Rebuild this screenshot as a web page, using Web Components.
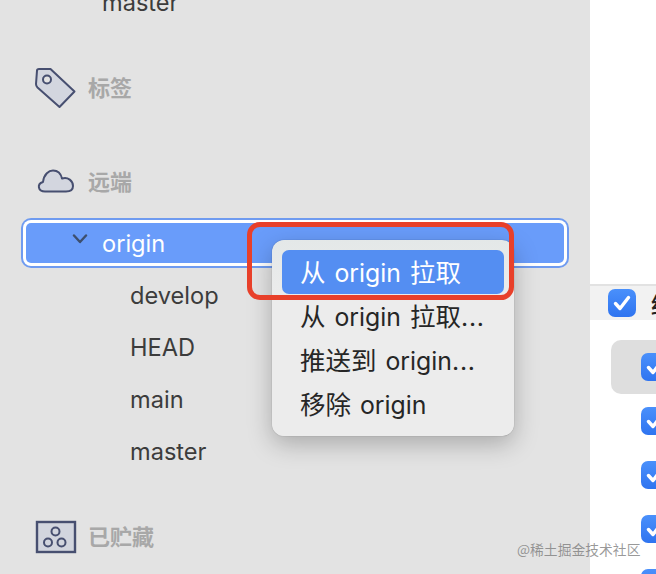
<!DOCTYPE html>
<html lang="zh">
<head>
<meta charset="utf-8">
<title>Remote menu</title>
<style>
  html, body { margin: 0; height: 100%; overflow: hidden; background: #e3e3e3; }
  body { font-family: Inter, "Noto Sans CJK SC", sans-serif; }
</style>
</head>
<body>
<app-shell>
  <side-bar slot="side">
    <tree-row level="1">master</tree-row>
    <section-head style="margin-top:32px">
      <svg slot="icon" width="42" height="42" viewBox="0 0 42 42" fill="#d3d6df" stroke="#474f70" stroke-width="2" stroke-linejoin="round">
        <path d="M2 3.6 Q2 2 4 2 L15.500 2 L39.500 24.500 L24.500 40 L2.500 20.500 Q1 19 1 17 Z"/>
        <circle cx="12" cy="12.500" r="4" fill="#e3e3e3"/>
      </svg>
      标签
    </section-head>
    <section-head style="margin-top:42px">
      <svg slot="icon" width="42" height="42" viewBox="0 0 42 42" fill="#d3d6df" stroke="#474f70" stroke-width="2" stroke-linejoin="round">
        <path d="M10 30.500 C3 30.500 1.500 23 8 21 C9 13 14 9.500 18 9.500 C23 9.500 26 13 27 17.500 C33 15.500 38 20 38 25 C38 29 35 30.500 31 30.500 Z"/>
      </svg>
      远端
    </section-head>
    <tree-row selected>
      <svg slot="chevron" width="16" height="10" viewBox="0 0 16 10" fill="none" stroke="#3d4f6e" stroke-width="2.400" stroke-linecap="round" stroke-linejoin="round"><path d="M2 1.500 L8 8 L14 1.500"/></svg>
      origin
    </tree-row>
    <tree-row level="2">develop</tree-row>
    <tree-row level="2">HEAD</tree-row>
    <tree-row level="2">main</tree-row>
    <tree-row level="2">master</tree-row>
    <section-head style="margin-top:32px">
      <svg slot="icon" width="42" height="42" viewBox="0 0 42 42" fill="none" stroke="#474f70" stroke-width="2">
        <rect x="2" y="6" width="38" height="30" fill="#d2d5de" stroke-width="2.400"/>
        <circle cx="20.500" cy="15.500" r="4"/>
        <circle cx="13" cy="26.500" r="4"/>
        <circle cx="26.500" cy="26.500" r="4"/>
      </svg>
      已贮藏
    </section-head>
  </side-bar>
  <change-list slot="main">
    <check-row head>结</check-row>
    <check-row active></check-row>
    <check-row></check-row>
    <check-row></check-row>
    <check-row></check-row>
    <check-row></check-row>
  </change-list>
  <context-menu slot="over">
    <menu-item active><span>从</span> origin <span>拉取</span></menu-item>
    <menu-item><span>从</span> origin <span>拉取</span><em>...</em></menu-item>
    <menu-item><span>推送到</span> origin<em>...</em></menu-item>
    <menu-item><span>移除</span> origin</menu-item>
  </context-menu>
  <mark-box slot="over"></mark-box>
  <water-mark slot="over">@稀土掘金技术社区</water-mark>
</app-shell>

<script>
// small helper, every element just gets its own shadow markup
function makeEl(name, html) {
  customElements.define(name, class extends HTMLElement {
    constructor() {
      super();
      const shadow = this.attachShadow({ mode: 'open' });
      const template = document.createElement('template');
      template.innerHTML = html;
      shadow.appendChild(template.content.cloneNode(true));
    }
  });
}

makeEl('app-shell', `
  <style>
    :host { display: flex; position: relative; width: 656px; height: 574px; overflow: hidden; }
  </style>
  <slot name="side"></slot>
  <slot name="main"></slot>
  <slot name="over"></slot>
`);

makeEl('side-bar', `
  <style>
    :host { display: block; flex: none; width: 590px; margin-top: -22px; background: #e3e3e3; color: #3c3c3c; font-size: 23.6px; }
  </style>
  <slot></slot>
`);

makeEl('section-head', `
  <style>
    :host { display: flex; align-items: center; height: 52px; padding-left: 35px; gap: 11px;
      font: 700 22px "Noto Sans CJK SC", sans-serif; color: #a8a8a8; }
    ::slotted(svg) { flex: none; }
    .label { margin-bottom: 4px; }
  </style>
  <slot name="icon"></slot>
  <span class="label"><slot></slot></span>
`);

makeEl('tree-row', `
  <style>
    :host { display: flex; align-items: center; box-sizing: border-box; height: 52px; padding-bottom: 3px; }
    :host([level="1"]) { padding-left: 102px; }
    :host([level="2"]) { padding-left: 130px; }
    :host([selected]) { height: 40px; margin: 15px 26px 8px 26px; padding: 0 0 0 46px;
      background: #699cfa; color: #fff; border-radius: 5px;
      box-shadow: 0 0 0 3px #fff, 0 0 0 5px #6f9bf0; }
    ::slotted(svg) { flex: none; margin: 0 14px 8px 0; }
  </style>
  <slot name="chevron"></slot>
  <slot></slot>
`);

makeEl('change-list', `
  <style>
    :host { display: flex; flex-direction: column; flex: 1; padding-top: 284px; background: #fff; overflow: hidden; }
  </style>
  <slot></slot>
`);

makeEl('check-row', `
  <style>
    :host { display: flex; align-items: center; flex: none; height: 54px; margin-left: 21px; padding-left: 30px; gap: 15px;
      border-radius: 10px 0 0 10px; font: 500 22px "Noto Sans CJK SC", sans-serif; color: #222; white-space: nowrap; }
    :host([head]) { height: 34px; margin: 0 0 20px 0; padding-left: 18px; border-radius: 0;
      background: #f2f2f2; border-top: 2px solid #e2e2e2; }
    :host([active]) { background: #dedede; }
    .box { flex: none; width: 28px; height: 28px; border-radius: 7px; background: linear-gradient(#4a90fb, #2f74f0); display: flex; align-items: center; justify-content: center; }
  </style>
  <span class="box">
    <svg width="20" height="20" viewBox="0 0 20 20" fill="none" stroke="#fff" stroke-width="3.400" stroke-linecap="round" stroke-linejoin="round"><path d="M3.500 10.500 L8 15.500 L16.500 4.500"/></svg>
  </span>
  <slot></slot>
`);

makeEl('context-menu', `
  <style>
    :host { display: flex; flex-direction: column; position: absolute; left: 272px; top: 240px; box-sizing: border-box; width: 242px; height: 196px; padding: 10px;
      border-radius: 12px; background: linear-gradient(#e4e8e8, #ececec 60px); box-shadow: 0 0 1px rgba(0,0,0,.45), 0 8px 24px rgba(0,0,0,.25); }
  </style>
  <slot></slot>
`);

makeEl('menu-item', `
  <style>
    :host { display: flex; align-items: center; flex: none; box-sizing: border-box; height: 44px; padding: 0 0 3px 18px; border-radius: 7px;
      font: 400 24.8px Inter, "Noto Sans CJK SC", sans-serif; color: #262626; white-space: pre; }
    ::slotted(span) { font-size: 25.5px; }
    ::slotted(em) { font-style: normal; letter-spacing: .8px; }
    .line { word-spacing: 2px; display: block; }
    :host([active]) { background: #548ef2; color: #fff; }
  </style>
  <span class="line"><slot></slot></span>
`);

makeEl('mark-box', `
  <style>
    :host { display: block; position: absolute; left: 247px; top: 222px; box-sizing: border-box; width: 267px; height: 78px;
      border: 5px solid #e8402a; border-radius: 13px; }
  </style>
`);

makeEl('water-mark', `
  <style>
    :host { display: block; position: absolute; left: 517px; top: 539px; font: 400 13.8px "Noto Sans CJK SC", sans-serif; color: rgba(120,120,120,.75); white-space: nowrap; }
  </style>
  <slot></slot>
`);
</script>
</body>
</html>
